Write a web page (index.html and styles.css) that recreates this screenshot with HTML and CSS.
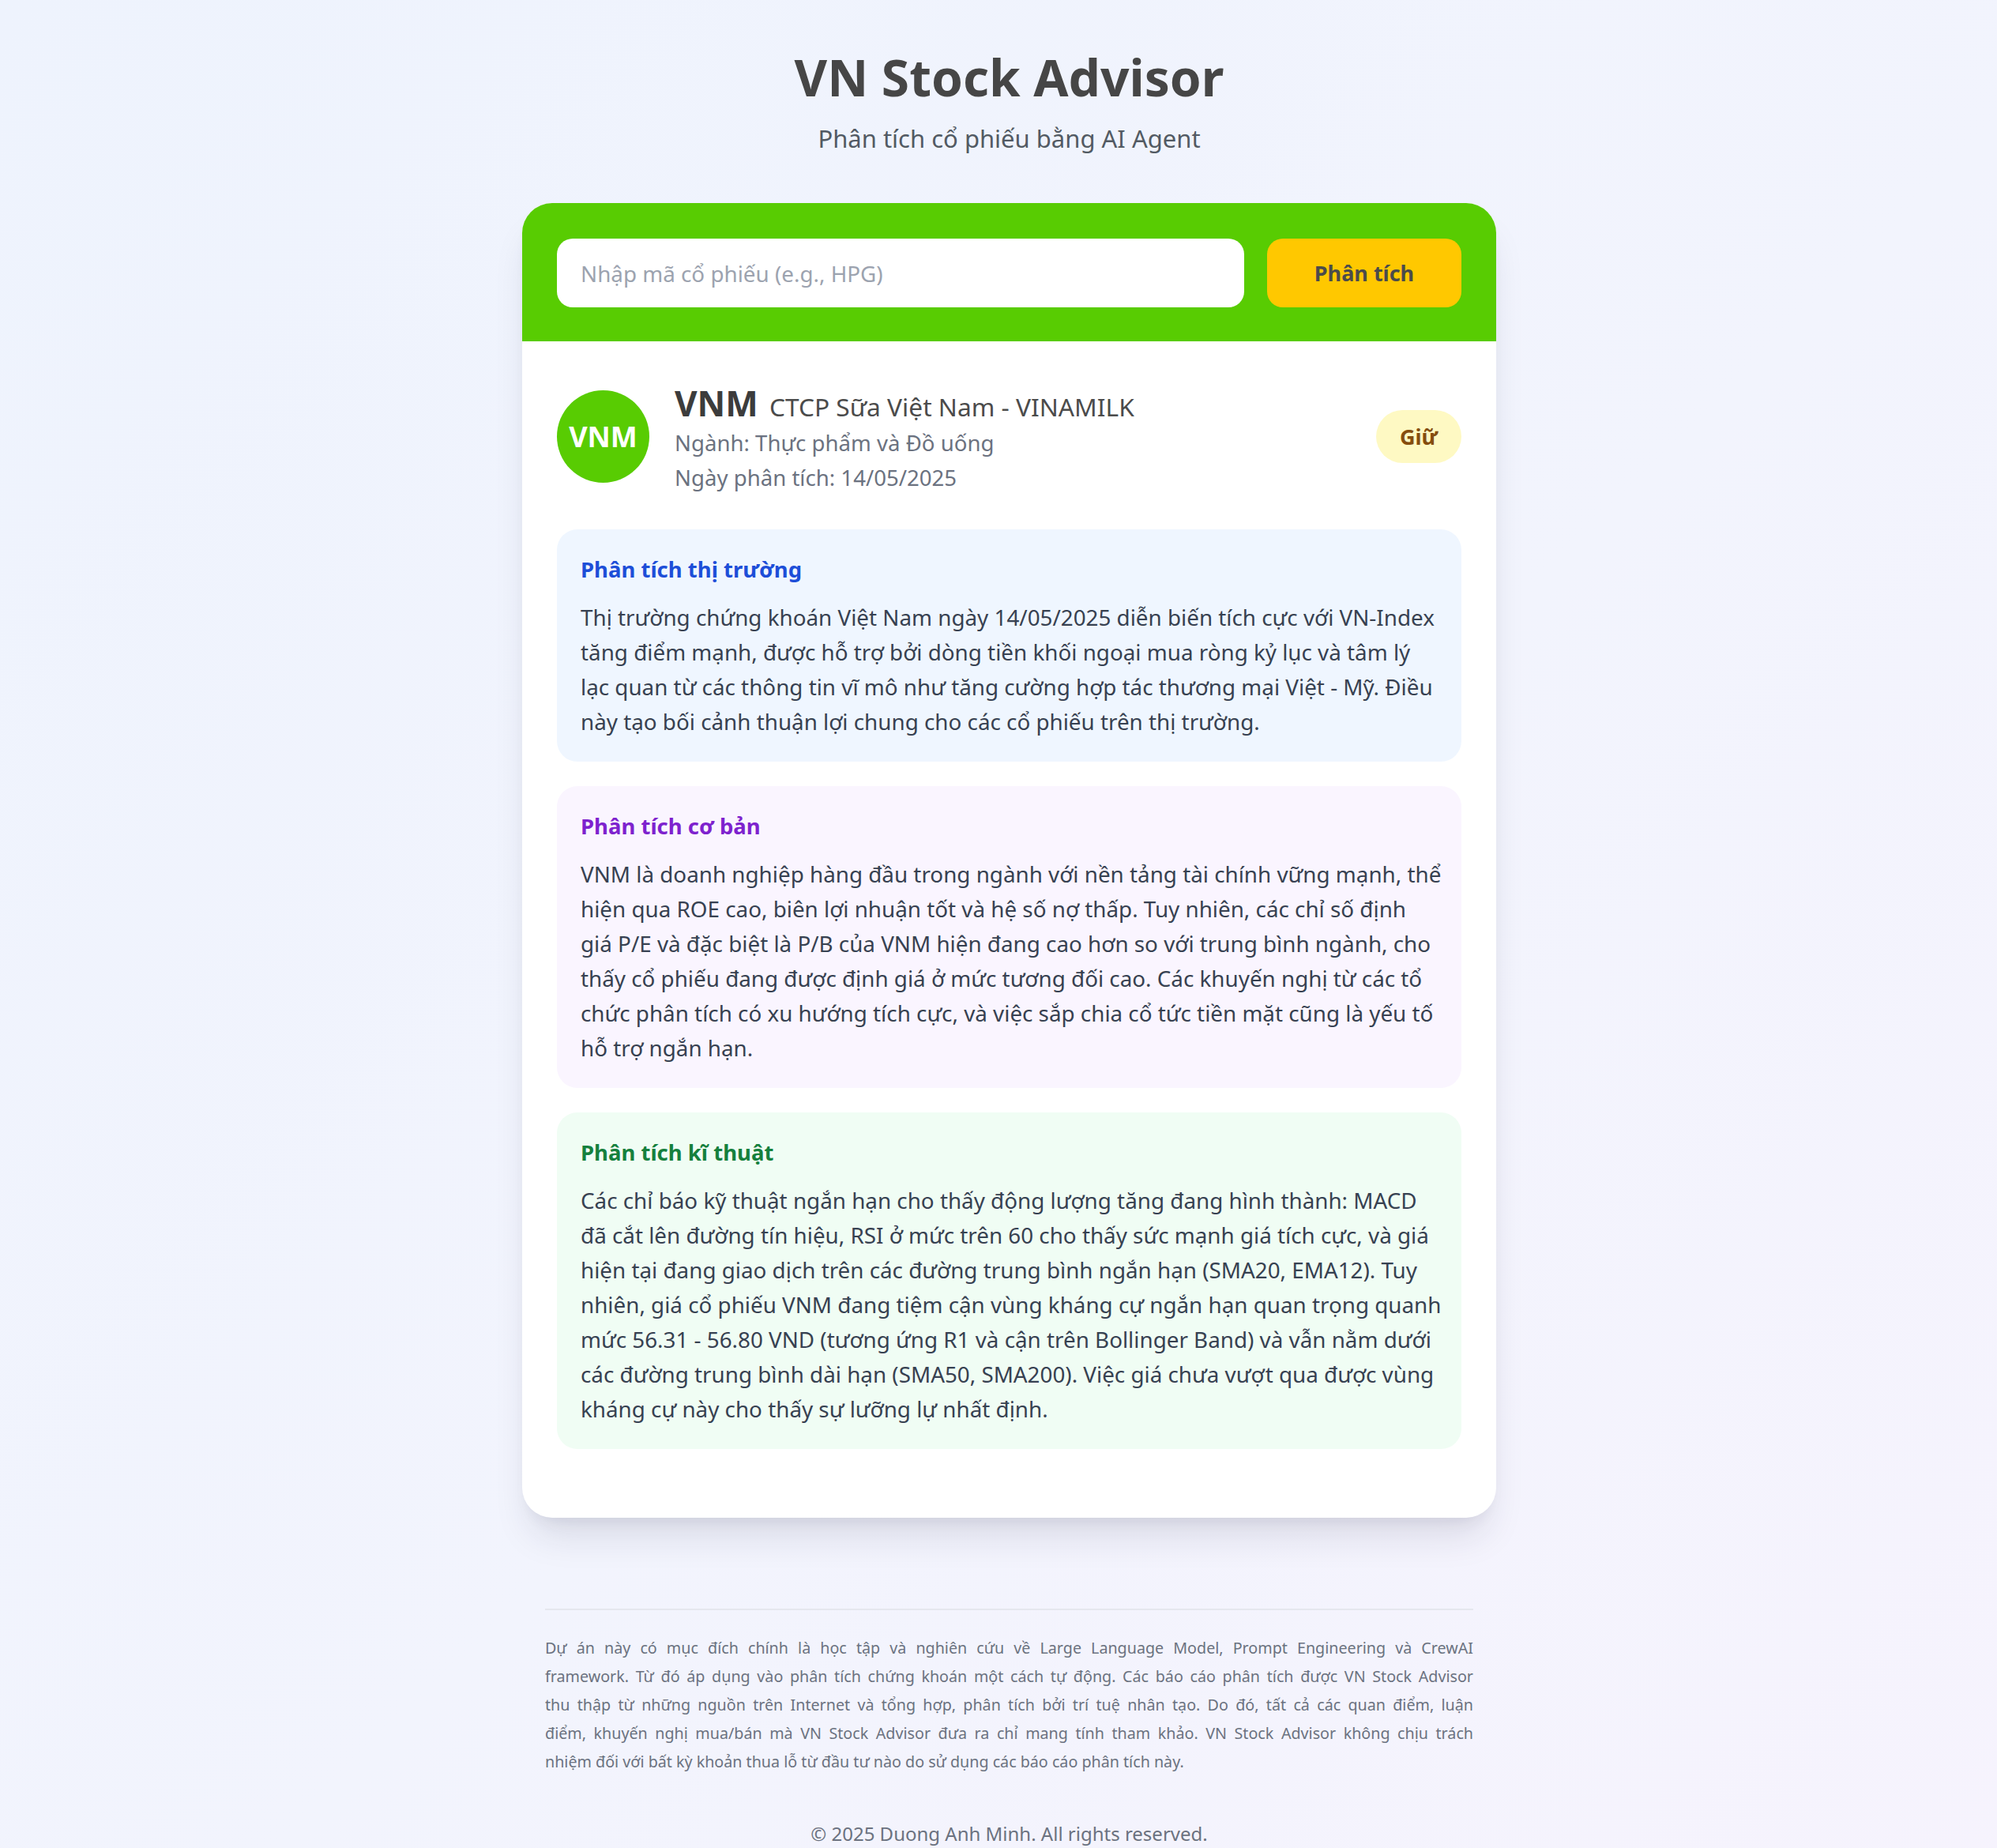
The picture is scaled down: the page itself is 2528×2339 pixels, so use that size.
FILE: index.html
```html
<!DOCTYPE html>
<html lang="vi">
<head>
<meta charset="utf-8">
<title>VN Stock Advisor</title>
<link rel="stylesheet" href="styles.css">
</head>
<body>
  <header class="page-header">
    <h1 class="title">VN Stock Advisor</h1>
    <p class="subtitle">Phân tích cổ phiếu bằng AI Agent</p>
  </header>

  <main class="card">
    <form class="search">
      <input class="search-input" type="text" placeholder="Nhập mã cổ phiếu (e.g., HPG)">
      <button class="search-btn" type="button">Phân tích</button>
    </form>

    <div class="content">
      <div class="stock">
        <div class="avatar">VNM</div>
        <div class="stock-info">
          <div class="stock-name"><span class="ticker">VNM</span><span class="company">CTCP Sữa Việt Nam - VINAMILK</span></div>
          <p class="meta">Ngành: Thực phẩm và Đồ uống</p>
          <p class="meta">Ngày phân tích: 14/05/2025</p>
        </div>
        <div class="badge">Giữ</div>
      </div>

      <section class="section section-market">
        <h2 class="section-title">Phân tích thị trường</h2>
        <p class="section-text">Thị trường chứng khoán Việt Nam ngày 14/05/2025 diễn biến tích cực với VN-Index<br>tăng điểm mạnh, được hỗ trợ bởi dòng tiền khối ngoại mua ròng kỷ lục và tâm lý<br>lạc quan từ các thông tin vĩ mô như tăng cường hợp tác thương mại Việt - Mỹ. Điều<br>này tạo bối cảnh thuận lợi chung cho các cổ phiếu trên thị trường.</p>
      </section>

      <section class="section section-fundamental">
        <h2 class="section-title">Phân tích cơ bản</h2>
        <p class="section-text">VNM là doanh nghiệp hàng đầu trong ngành với nền tảng tài chính vững mạnh, thể<br>hiện qua ROE cao, biên lợi nhuận tốt và hệ số nợ thấp. Tuy nhiên, các chỉ số định<br>giá P/E và đặc biệt là P/B của VNM hiện đang cao hơn so với trung bình ngành, cho<br>thấy cổ phiếu đang được định giá ở mức tương đối cao. Các khuyến nghị từ các tổ<br>chức phân tích có xu hướng tích cực, và việc sắp chia cổ tức tiền mặt cũng là yếu tố<br>hỗ trợ ngắn hạn.</p>
      </section>

      <section class="section section-technical">
        <h2 class="section-title">Phân tích kĩ thuật</h2>
        <p class="section-text">Các chỉ báo kỹ thuật ngắn hạn cho thấy động lượng tăng đang hình thành: MACD<br>đã cắt lên đường tín hiệu, RSI ở mức trên 60 cho thấy sức mạnh giá tích cực, và giá<br>hiện tại đang giao dịch trên các đường trung bình ngắn hạn (SMA20, EMA12). Tuy<br>nhiên, giá cổ phiếu VNM đang tiệm cận vùng kháng cự ngắn hạn quan trọng quanh<br>mức 56.31 - 56.80 VND (tương ứng R1 và cận trên Bollinger Band) và vẫn nằm dưới<br>các đường trung bình dài hạn (SMA50, SMA200). Việc giá chưa vượt qua được vùng<br>kháng cự này cho thấy sự lưỡng lự nhất định.</p>
      </section>
    </div>
  </main>

  <footer class="footer">
    <p class="disclaimer"><span class="line">Dự án này có mục đích chính là học tập và nghiên cứu về Large Language Model, Prompt Engineering và CrewAI</span><span class="line">framework. Từ đó áp dụng vào phân tích chứng khoán một cách tự động. Các báo cáo phân tích được VN Stock Advisor</span><span class="line">thu thập từ những nguồn trên Internet và tổng hợp, phân tích bởi trí tuệ nhân tạo. Do đó, tất cả các quan điểm, luận</span><span class="line">điểm, khuyến nghị mua/bán mà VN Stock Advisor đưa ra chỉ mang tính tham khảo. VN Stock Advisor không chịu trách</span><span class="line line-last">nhiệm đối với bất kỳ khoản thua lỗ từ đầu tư nào do sử dụng các báo cáo phân tích này.</span></p>
    <p class="copyright">© 2025 Duong Anh Minh. All rights reserved.</p>
  </footer>
</body>
</html>
```

FILE: styles.css
```css
* {
  box-sizing: border-box;
}

html,
body {
  margin: 0;
}

body {
  min-height: 100vh;
  padding: 0 0 0 27px;
  background: linear-gradient(135deg, #eef3fd 0%, #f2f4fd 55%, #f6f3fd 100%);
  font-family: "Noto Sans", "Open Sans", sans-serif;
  color: #374151;
}

.page-header {
  text-align: center;
  padding-top: 59px;
}

.title {
  margin: 0;
  font-size: 64px;
  line-height: 77px;
  font-weight: 700;
  color: #464646;
}

.subtitle {
  margin: 15px 0 0;
  font-size: 31px;
  line-height: 48px;
  color: #525a63;
}

.card {
  width: 1233px;
  margin: 58px auto 0;
  background: #ffffff;
  border-radius: 38px;
  overflow: hidden;
  box-shadow: 0 32px 48px -12px rgba(30, 30, 60, 0.13), 0 12px 20px -10px rgba(30, 30, 60, 0.08);
}

.search {
  display: flex;
  gap: 29px;
  margin: 0;
  padding: 45px 44px 43px;
  background: #58cc02;
}

.search-input {
  flex: 1;
  min-width: 0;
  height: 87px;
  padding: 0 30px;
  border: none;
  border-radius: 20px;
  background: #ffffff;
  font-family: inherit;
  font-size: 27.8px;
  color: #374151;
  outline: none;
}

.search-input::placeholder {
  color: #9ca3af;
}

.search-btn {
  flex: none;
  width: 246px;
  height: 87px;
  border: none;
  border-radius: 20px;
  background: #ffc800;
  color: #4b4b4b;
  font-family: inherit;
  font-size: 27px;
  font-weight: 700;
}

.content {
  padding: 50px 44px 87px;
}

.stock {
  display: flex;
  align-items: center;
  gap: 32px;
  margin-bottom: 44px;
}

.avatar {
  flex: none;
  width: 117px;
  height: 117px;
  margin-top: -4px;
  border-radius: 50%;
  background: #58cc02;
  color: #ffffff;
  display: flex;
  align-items: center;
  justify-content: center;
  font-size: 36px;
  font-weight: 700;
}

.stock-info {
  flex: 1;
}

.stock-name {
  height: 56px;
  line-height: 56px;
  white-space: nowrap;
}

.ticker {
  font-size: 44px;
  font-weight: 700;
  color: #3c3c3c;
}

.company {
  margin-left: 14px;
  font-size: 31.7px;
  color: #4b4b4b;
}

.meta {
  margin: 0;
  font-size: 27.6px;
  line-height: 44px;
  color: #6b7280;
}

.badge {
  flex: none;
  display: flex;
  align-items: center;
  height: 67px;
  margin-top: -4px;
  padding: 0 30px;
  border-radius: 34px;
  background: #fef9c3;
  color: #854d0e;
  font-size: 27px;
  font-weight: 700;
}

.section {
  margin-bottom: 31px;
  padding: 29px 30px 29px;
  border-radius: 26px;
}

.section:last-child {
  margin-bottom: 0;
}

.section-market {
  background: #eff6ff;
}

.section-fundamental {
  background: #faf5ff;
}

.section-technical {
  background: #f0fdf4;
}

.section-title {
  margin: 0 0 16px;
  font-size: 27.5px;
  line-height: 44px;
  font-weight: 700;
}

.section-market .section-title {
  color: #1d4ed8;
}

.section-fundamental .section-title {
  color: #7e22ce;
}

.section-technical .section-title {
  color: #15803d;
}

.section-text {
  margin: 0;
  font-size: 27.8px;
  line-height: 44px;
  white-space: nowrap;
  color: #374151;
}

.footer {
  width: 1175px;
  margin: 115px auto 0;
  padding-top: 30px;
  border-top: 2px solid #e5e7ee;
  color: #6b7280;
}

.disclaimer {
  margin: 0;
  font-size: 19.7px;
  line-height: 36px;
}

.disclaimer .line {
  display: block;
  text-align: justify;
  text-align-last: justify;
}

.disclaimer .line-last {
  text-align-last: left;
}

.copyright {
  margin: 56px 0 0;
  padding-bottom: 40px;
  text-align: center;
  font-size: 24px;
  line-height: 34px;
}
```
